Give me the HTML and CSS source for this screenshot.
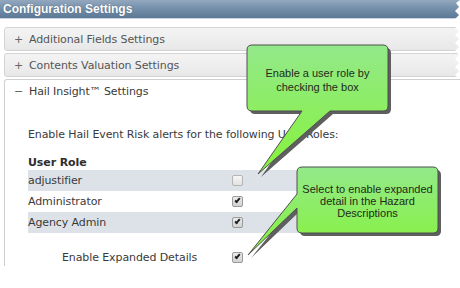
FILE: index.html
```html
<!DOCTYPE html>
<html lang="en">
<head>
	<meta charset="UTF-8">
	<title>Configuration Settings</title>
	<link rel="stylesheet" href="styles.css">
</head>
<body>
	<div class="page">
		<div class="titlebar">Configuration Settings</div>

		<div class="accordion">
			<div class="acc-head"><span class="sign">+</span>Additional Fields Settings</div>
			<div class="acc-head"><span class="sign">+</span>Contents Valuation Settings</div>

			<div class="acc-panel">
				<div class="acc-head open"><span class="sign">&minus;</span>Hail Insight&trade; Settings</div>
				<div class="acc-body">
					<p class="intro">Enable Hail Event Risk alerts for the following User Roles:</p>
					<div class="roles">
						<div class="roles-head">User Role</div>
						<div class="role-row alt"><span class="role-name">adjustifier</span><span class="check"></span></div>
						<div class="role-row"><span class="role-name">Administrator</span><span class="check on"></span></div>
						<div class="role-row alt"><span class="role-name">Agency Admin</span><span class="check on"></span></div>
					</div>
					<div class="expanded">
						<span class="expanded-label">Enable Expanded Details</span><span class="check on"></span>
					</div>
				</div>
			</div>
		</div>

		<!-- callouts drawn over the form -->
		<svg class="overlay" width="460" height="288" viewBox="0 0 460 288">
			<defs>
				<linearGradient id="green" x1="0" y1="0" x2="0" y2="1">
					<stop offset="0" stop-color="#93e98a"/>
					<stop offset="1" stop-color="#86f23a"/>
				</linearGradient>
				<filter id="soft" x="-10%" y="-10%" width="130%" height="130%">
					<feGaussianBlur stdDeviation="0.7"/>
				</filter>
			</defs>

			<!-- torn right edge -->
			<polygon fill="#fff" points="460,0 456,3 459,7 455,11 459,15 455,19 459,23 455,27 459,31 455,35 459,39 455,43 459,47 455,51 459,55 455,59 459,63 455,67 459,71 455,75 459,79 460,79"/>

			<g class="callout">
				<path fill="#5e5e5e" filter="url(#soft)" transform="translate(3,3)"
					d="M252,45 H383 Q388,45 388,50 V106 Q388,111 383,111 H330 L258,174 L302,111 H252 Q247,111 247,106 V50 Q247,45 252,45 Z"/>
				<path fill="url(#green)" stroke="#4f4f4f" stroke-width="1"
					d="M252,45 H383 Q388,45 388,50 V106 Q388,111 383,111 H330 L258,174 L302,111 H252 Q247,111 247,106 V50 Q247,45 252,45 Z"/>
			</g>

			<g class="callout">
				<path fill="#5e5e5e" filter="url(#soft)" transform="translate(3,3)"
					d="M302,167 H433 Q438,167 438,172 V228 Q438,233 433,233 H302 Q297,233 297,228 V208 L248,255 L297,194 V172 Q297,167 302,167 Z"/>
				<path fill="url(#green)" stroke="#4f4f4f" stroke-width="1"
					d="M302,167 H433 Q438,167 438,172 V228 Q438,233 433,233 H302 Q297,233 297,228 V208 L248,255 L297,194 V172 Q297,167 302,167 Z"/>
			</g>
		</svg>

		<div class="tip tip-role">Enable a user role by<br>checking the box</div>
		<div class="tip tip-detail">Select to enable expanded<br>detail in the Hazard<br>Descriptions</div>
	</div>
</body>
</html>
```

FILE: styles.css
```css
*,
*::before,
*::after {
	margin: 0;
	padding: 0;
	box-sizing: border-box;
}

body {
	background: #fff;
	color: #3a3a3a;
	font-family: "DejaVu Sans", Verdana, sans-serif;
	font-size: 11px;
	letter-spacing: -0.1px;
}

.page {
	position: relative;
	width: 460px;
	height: 288px;
	overflow: hidden;
}

/**
* Title bar
*/
.titlebar {
	height: 19px;
	line-height: 19px;
	padding-left: 3px;
	color: #fff;
	font-family: "Liberation Sans", Arial, sans-serif;
	font-weight: bold;
	font-size: 12px;
	letter-spacing: 0;
	text-shadow: 0 0 1px #3c536b;
	background: linear-gradient(to bottom, #93a8be 0%, #7590ab 45%, #5b7896 100%);
	border-bottom: 1px solid #c9d2dc;
}

/**
* Accordion
*/
.accordion {
	padding: 8px 0 0 4px;
	margin-right: -12px;
}

.acc-head {
	height: 24px;
	line-height: 23px;
	margin-bottom: 2px;
	padding-left: 9px;
	border: 1px solid #d3d3d3;
	border-radius: 3px;
	background: linear-gradient(to bottom, #f4f4f4, #e8e8e8);
	color: #555;
	white-space: nowrap;
}

.sign {
	display: inline-block;
	width: 15px;
	color: #666;
}

.acc-panel {
	border: 1px solid #cfcfcf;
	border-bottom: none;
	border-radius: 3px 3px 0 0;
	background: #fff;
}

.acc-head.open {
	border: none;
	background: none;
	height: 24px;
	line-height: 24px;
	margin: 0;
	color: #3a3a3a;
}

.acc-body {
	padding: 24px 0 0 23px;
	margin-bottom: -10px;
}

.intro {
	line-height: 14px;
}

.roles {
	width: 290px;
	margin-top: 14px;
}

.roles-head {
	font-weight: bold;
	line-height: 14px;
	color: #2e2e2e;
}

.role-row {
	display: flex;
	align-items: center;
	height: 21px;
}

.role-row.alt {
	background: #dde2e8;
}

.role-name {
	width: 204px;
}

.expanded {
	display: flex;
	align-items: center;
	height: 18px;
	margin-top: 15px;
	padding-left: 34px;
}

.expanded-label {
	width: 170px;
}

/* checkbox look */
.check {
	display: inline-block;
	position: relative;
	width: 11px;
	height: 11px;
	border: 1px solid #b5b5b5;
	border-radius: 2px;
	background: linear-gradient(to bottom, #f6f6f6, #e2e2e2);
}

.check.on {
	border-color: #9a9a9a;
	background: linear-gradient(to bottom, #ececec, #d2d2d2);
}

.check.on::after {
	content: "";
	position: absolute;
	left: 3px;
	top: 0;
	width: 3px;
	height: 6px;
	border: solid #222;
	border-width: 0 2px 2px 0;
	transform: rotate(40deg);
}

/**
* Callouts
*/
.overlay {
	position: absolute;
	top: 0;
	left: 0;
	pointer-events: none;
}

.tip {
	position: absolute;
	font-family: "Liberation Sans", Arial, sans-serif;
	font-size: 11px;
	letter-spacing: 0;
	color: #1f2a1a;
	text-align: center;
}

.tip-role {
	left: 247px;
	top: 66px;
	width: 141px;
	line-height: 14px;
}

.tip-detail {
	left: 297px;
	top: 183px;
	width: 141px;
	line-height: 12px;
}
```
